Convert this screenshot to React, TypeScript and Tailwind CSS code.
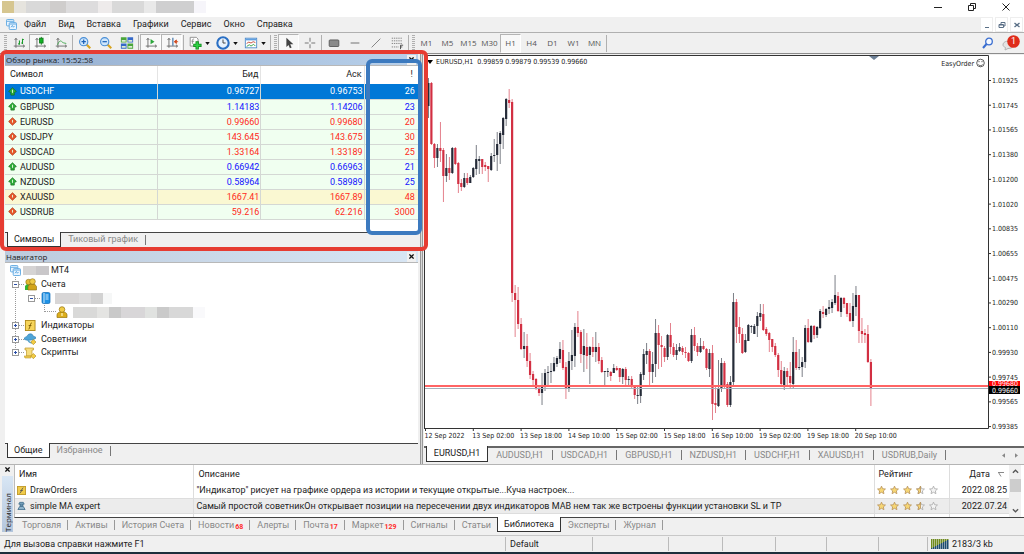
import type { ReactNode } from "react";

type Quote = { symbol: string; bid: string; ask: string; spread: string; up: boolean; color: string; row: string };

const ROW = "bg-[#f0fff0]";
const QUOTES: Quote[] = [
  { symbol: "USDCHF", bid: "0.96727", ask: "0.96753", spread: "26", up: true, color: "text-white", row: "bg-[#0078d7] text-white" },
  { symbol: "GBPUSD", bid: "1.14183", ask: "1.14206", spread: "23", up: true, color: "text-[#1414ff]", row: ROW },
  { symbol: "EURUSD", bid: "0.99660", ask: "0.99680", spread: "20", up: false, color: "text-[#ff2a1a]", row: ROW },
  { symbol: "USDJPY", bid: "143.645", ask: "143.675", spread: "30", up: false, color: "text-[#ff2a1a]", row: ROW },
  { symbol: "USDCAD", bid: "1.33164", ask: "1.33189", spread: "25", up: false, color: "text-[#ff2a1a]", row: ROW },
  { symbol: "AUDUSD", bid: "0.66942", ask: "0.66963", spread: "21", up: true, color: "text-[#1414ff]", row: ROW },
  { symbol: "NZDUSD", bid: "0.58964", ask: "0.58989", spread: "25", up: true, color: "text-[#1414ff]", row: ROW },
  { symbol: "XAUUSD", bid: "1667.41", ask: "1667.89", spread: "48", up: false, color: "text-[#ff2a1a]", row: "bg-[#faf8d2]" },
  { symbol: "USDRUB", bid: "59.216", ask: "62.216", spread: "3000", up: false, color: "text-[#ff2a1a]", row: ROW },
];

const MENU = ["Файл", "Вид", "Вставка", "Графики", "Сервис", "Окно", "Справка"];
const FRAMES = ["M1", "M5", "M15", "M30", "H1", "H4", "D1", "W1", "MN"];
const CHART_TABS = ["EURUSD,H1", "AUDUSD,H1", "USDCAD,H1", "GBPUSD,H1", "NZDUSD,H1", "USDCHF,H1", "XAUUSD,H1", "USDRUB,Daily"];
const TERMINAL_TABS: { name: string; count?: string }[] = [
  { name: "Торговля" },
  { name: "Активы" },
  { name: "История Счета" },
  { name: "Новости", count: "68" },
  { name: "Алерты" },
  { name: "Почта", count: "17" },
  { name: "Маркет", count: "129" },
  { name: "Сигналы" },
  { name: "Статьи" },
  { name: "Библиотека" },
  { name: "Эксперты" },
  { name: "Журнал" },
];

const PRICES = ["1.01925", "1.01745", "1.01565", "1.01380", "1.01200", "1.01020", "1.00835", "1.00655", "1.00475", "1.00290", "1.00110", "0.99930", "0.99745", "0.99565", "0.99385"];
const DATES = ["12 Sep 2022", "13 Sep 02:00", "13 Sep 18:00", "14 Sep 10:00", "15 Sep 02:00", "15 Sep 18:00", "16 Sep 10:00", "19 Sep 02:00", "19 Sep 18:00", "20 Sep 10:00"];

// high, body top, body bottom, low, 1 = bull
const CANDLES: number[][] = [
  [78, 83, 106, 118, 1], [82, 83, 144, 145, 0], [143, 144, 158, 168, 0], [144, 148, 158, 167, 1], [122, 148, 151, 162, 0],
  [148, 150, 176, 202, 0], [154, 168, 176, 182, 1], [157, 168, 173, 180, 0], [147, 148, 173, 174, 1], [147, 148, 164, 165, 0],
  [162, 163, 184, 193, 0], [179, 183, 187, 191, 0], [173, 178, 187, 188, 1], [173, 178, 183, 185, 0], [175, 177, 183, 183, 1],
  [167, 168, 177, 178, 1], [145, 159, 169, 175, 1], [156, 159, 161, 174, 1], [159, 159, 167, 174, 0], [162, 165, 167, 171, 0],
  [166, 166, 169, 182, 0], [153, 156, 170, 171, 1], [139, 155, 156, 162, 1], [132, 144, 155, 171, 1], [131, 133, 144, 164, 1],
  [117, 118, 135, 149, 1], [98, 99, 119, 126, 1], [89, 100, 103, 108, 0], [99, 102, 293, 302, 0], [285, 293, 300, 337, 0],
  [287, 300, 324, 329, 0], [318, 324, 349, 350, 0], [332, 346, 349, 358, 1], [334, 346, 361, 367, 0], [353, 361, 375, 379, 0],
  [371, 374, 380, 387, 0], [378, 379, 389, 390, 0], [385, 389, 393, 396, 0], [373, 386, 393, 405, 1], [369, 373, 386, 391, 1],
  [366, 372, 373, 387, 1], [363, 371, 372, 383, 1], [357, 363, 371, 372, 1], [356, 358, 364, 367, 1], [342, 349, 359, 363, 1],
  [340, 350, 368, 370, 0], [362, 367, 389, 399, 0], [352, 361, 389, 392, 1], [330, 355, 361, 370, 1], [323, 327, 356, 367, 1],
  [311, 327, 333, 337, 0], [330, 332, 354, 363, 0], [329, 346, 355, 372, 1], [333, 347, 356, 369, 0], [346, 347, 355, 384, 1],
  [337, 347, 352, 357, 0], [332, 347, 352, 362, 1], [343, 347, 361, 364, 0], [357, 360, 372, 373, 0], [371, 371, 372, 386, 1],
  [368, 371, 372, 377, 1], [371, 372, 376, 381, 0], [364, 368, 373, 373, 1], [366, 368, 370, 371, 0], [368, 368, 377, 382, 0],
  [368, 369, 377, 384, 1], [367, 369, 380, 385, 0], [376, 379, 380, 385, 1], [376, 379, 387, 389, 0], [385, 386, 395, 399, 0],
  [387, 395, 396, 404, 1], [372, 374, 396, 403, 1], [349, 354, 375, 380, 1], [343, 351, 355, 364, 1], [349, 351, 372, 385, 0],
  [352, 364, 372, 383, 1], [319, 333, 364, 377, 1], [325, 333, 345, 369, 0], [336, 345, 347, 367, 0], [346, 348, 357, 362, 0],
  [334, 335, 357, 360, 1], [323, 335, 347, 354, 0], [343, 347, 355, 357, 0], [344, 350, 355, 360, 1], [343, 347, 351, 352, 1],
  [346, 348, 352, 355, 0], [347, 352, 353, 358, 0], [352, 353, 361, 362, 0], [329, 335, 361, 363, 1], [327, 335, 346, 351, 0],
  [343, 346, 352, 356, 0], [338, 346, 352, 353, 1], [341, 346, 349, 350, 0], [348, 349, 368, 370, 0], [349, 353, 369, 377, 1],
  [345, 353, 404, 420, 0], [386, 403, 405, 413, 0], [360, 388, 406, 407, 1], [358, 363, 388, 392, 1], [361, 363, 385, 389, 0],
  [382, 384, 405, 407, 0], [376, 382, 405, 407, 1], [293, 302, 382, 387, 1], [299, 302, 327, 343, 0], [317, 327, 334, 343, 0],
  [328, 334, 353, 354, 0], [334, 340, 352, 353, 1], [324, 325, 341, 341, 1], [325, 326, 327, 333, 1], [324, 326, 334, 334, 1],
  [312, 316, 326, 337, 1], [304, 313, 317, 321, 1], [304, 314, 330, 331, 0], [327, 329, 334, 336, 0], [332, 333, 340, 352, 0],
  [339, 339, 347, 352, 0], [343, 346, 355, 357, 0], [353, 355, 370, 377, 0], [361, 370, 384, 387, 0], [367, 371, 385, 390, 1],
  [368, 371, 377, 386, 0], [362, 376, 383, 389, 0], [337, 352, 384, 389, 1], [340, 352, 368, 370, 0], [349, 367, 368, 370, 1],
  [357, 362, 367, 377, 1], [325, 328, 362, 368, 1], [319, 328, 342, 343, 0], [325, 326, 342, 343, 1], [325, 326, 335, 339, 0],
  [326, 327, 335, 338, 1], [309, 311, 328, 329, 1], [306, 312, 314, 318, 0], [308, 309, 315, 317, 1], [300, 307, 309, 314, 1],
  [299, 302, 308, 313, 1], [275, 295, 303, 305, 1], [292, 296, 311, 312, 0], [297, 298, 312, 317, 1], [297, 298, 304, 308, 0],
  [303, 303, 314, 317, 0], [303, 313, 321, 322, 0], [293, 306, 321, 327, 1], [286, 295, 307, 316, 1], [295, 295, 331, 343, 0],
  [318, 331, 334, 343, 0], [329, 333, 335, 343, 0], [325, 334, 362, 363, 0], [359, 362, 389, 406, 0],
];

function Ico({ children }: { children: ReactNode }) {
  return (
    <svg viewBox="0 0 16 16" className="h-[14px] w-[14px] shrink-0" fill="none">
      {children}
    </svg>
  );
}

const AXES = <path d="M4.500 3v10.500M2 11.500h12M3 4.500l1.500-2 1.500 2M12.500 10l2 1.500-2 1.500" stroke="#666" />;

function Lens({ minus }: { minus?: boolean }) {
  return (
    <Ico>
      <path d="M9.500 9.500l4.500 4.500" stroke="#d8a420" strokeWidth="2.500" />
      <circle cx="6.500" cy="6.500" r="4.700" fill="#cfe6fb" stroke="#4a8fd6" strokeWidth="1.300" />
      <path d={minus ? "M4 6.500h5" : "M4 6.500h5M6.500 4v5"} stroke="#1b62b8" strokeWidth="1.400" />
    </Ico>
  );
}

function Tool({ label, pressed, drop, children }: { label: string; pressed?: boolean; drop?: boolean; children: ReactNode }) {
  return (
    <button
      aria-label={label}
      className={`flex h-[19px] shrink-0 items-center justify-center text-[#555] ${drop ? "w-7 gap-[3px]" : "w-[21px]"} ${
        pressed ? "border border-[#b4b4b4] border-r-white border-b-white bg-[#f8f8f8]" : ""
      }`}
    >
      {children}
      {drop && (
        <svg viewBox="0 0 6 4" className="h-[3px] w-[5px]">
          <path d="M0 0h6L3 4z" fill="#111" />
        </svg>
      )}
    </button>
  );
}

function Sep() {
  return <div className="mx-px h-[17px] w-px shrink-0 bg-[#b0b0b0]" />;
}

function Grip() {
  return <div className="mr-px ml-[2px] h-4 w-[3px] shrink-0 bg-[repeating-linear-gradient(#b0b0b0_0_1px,#f0f0f0_1px_2px)]" />;
}

function AppLogo({ className }: { className: string }) {
  return (
    <svg viewBox="0 0 12 12" className={className} fill="#eaf5ff" stroke="#5aa5e0">
      <rect x=".5" y=".5" width="8" height="7" rx="1" />
      <path d="M1 2.500h7" />
      <rect x="3.500" y="4" width="8" height="7.500" rx="1" />
      <path d="M4 5.500h7M5.500 9l1.500-2 1 2 1.500-1.500" />
    </svg>
  );
}

function MenuBar() {
  return (
    <div className="flex h-4 items-center border-b border-[#b0b0b0] bg-[#f0f0f0] pl-[6px] text-[9px] text-[#222]">
      <AppLogo className="mr-px h-[11px] w-[11px]" />
      {MENU.map((m) => (
        <button key={m} className="pr-[6px] pl-[6px] leading-none last-of-type:pr-0">
          {m}
        </button>
      ))}
      <div className="ml-auto flex h-full gap-[2px] bg-white pr-px text-[#5a6f86]">
        <button aria-label="Свернуть график" className="flex w-[13px] items-center justify-center border border-[#eee]">
          <svg viewBox="0 0 8 8" className="h-2 w-2"><path d="M2 6.500h4" stroke="currentColor" /></svg>
        </button>
        <button aria-label="Восстановить график" className="flex w-[13px] items-center justify-center border border-[#eee]">
          <svg viewBox="0 0 8 8" className="h-2 w-2" fill="none" stroke="currentColor"><path d="M3 3V1.500h4V5H6M1 3.500h4.500v3H1zM1 4h4" /></svg>
        </button>
        <button aria-label="Закрыть график" className="flex w-[13px] items-center justify-center border border-[#eee]">
          <svg viewBox="0 0 8 8" className="h-2 w-2" stroke="currentColor" strokeWidth="1.400"><path d="M1.500 2l5 4M6.500 2l-5 4" /></svg>
        </button>
      </div>
    </div>
  );
}

function Toolbar() {
  return (
    <div className="flex h-[21px] items-center border-b border-[#8c8c8c] bg-[#f0f0f0] pl-[2px]">
      <Grip />
      <Tool label="Бары"><Ico>{AXES}<path d="M8.500 5v5M8.500 9H7M12 3v6M12 4h1.500M10.500 8H12" stroke="#189a2a" strokeWidth="1.200" /></Ico></Tool>
      <Tool label="Японские свечи" pressed><Ico>{AXES}<path d="M9.500 1v9" stroke="#117a1c" /><rect x="7.500" y="2.500" width="4" height="5.500" fill="#12b325" stroke="#117a1c" /></Ico></Tool>
      <Tool label="Линия"><Ico>{AXES}<path d="M4 10c2-5 4-5 5-3.500S12 8 14 8.500" stroke="#3aa648" /></Ico></Tool>
      <Sep />
      <Tool label="Увеличить"><Lens /></Tool>
      <Tool label="Уменьшить"><Lens minus /></Tool>
      <Tool label="Расположить окна">
        <Ico>
          <path d="M1 1.500h6.500v6H1zM8.500 8.500H15v6H8.500z" fill="#4aa53a" />
          <path d="M8.500 1.500H15v6H8.500zM1 8.500h6.500v6H1z" fill="#3568c8" />
          <path d="M2 4.500h4.500v2H2zM9.500 4.500H14v2H9.500zM2 11.500h4.500v2H2zM9.500 11.500H14v2H9.500z" fill="#dcebd5" />
        </Ico>
      </Tool>
      <Sep />
      <Tool label="Автопрокрутка" pressed><Ico>{AXES}<path d="M7.500 3.500v6l4.500-3z" fill="#2ba53a" /></Ico></Tool>
      <Tool label="Сдвиг графика" pressed><Ico>{AXES}<path d="M9 2v9" stroke="#3a6ea5" strokeWidth="1.300" /><path d="M15 6.500h-2M10.500 6.500l2.500-2v4z" fill="#d0481c" stroke="#d0481c" /></Ico></Tool>
      <Sep />
      <Tool label="Индикаторы" drop>
        <Ico>
          <path d="M2.500 1.500h7l2 2v8h-9z" fill="#fff" stroke="#888" />
          <path d="M5 9V5c0-1 .5-1.500 2-1.500M4 6h3" stroke="#888" />
          <path d="M10.500 6v9.500M6 10.800h9.500" stroke="#0f8a1d" strokeWidth="3.800" />
          <path d="M10.500 7v7.500M7 10.800h7.500" stroke="#2fd045" strokeWidth="2" />
        </Ico>
      </Tool>
      <Tool label="Периоды" drop>
        <Ico>
          <circle cx="8" cy="8" r="6.500" fill="#e8f2fd" stroke="#2a6fc4" strokeWidth="2.400" />
          <path d="M8 4v4h3" stroke="#333" />
        </Ico>
      </Tool>
      <Tool label="Шаблоны" drop>
        <Ico>
          <rect x="1.500" y="2.500" width="13" height="11" fill="#fff" stroke="#4a88c8" />
          <path d="M2 4h12" stroke="#5f9fe0" strokeWidth="2" />
          <path d="M3 8.500l2.500-1.500L8 8l2.500-1.500L13 7.500" stroke="#c0402c" />
          <path d="M3 12l3-2 2 1.500 3-2 2 2" stroke="#2a9a3a" />
        </Ico>
      </Tool>
      <Sep />
      <Grip />
      <Tool label="Курсор" pressed><Ico><path d="M5 2v10.500l2.500-2.300L9 14l2-.8-1.600-3.700H13z" fill="#444" /></Ico></Tool>
      <Tool label="Перекрестие"><Ico><path d="M8 2v4.500M8 9.500V14M2 8h4.500M9.500 8H14" stroke="#666" /></Ico></Tool>
      <Sep />
      <Tool label="Прямоугольник"><Ico><rect x="2.500" y="4.500" width="11" height="7.500" rx="1" fill="#8a8a8a" stroke="#555" /></Ico></Tool>
      <Tool label="Горизонтальная линия"><Ico><path d="M3 8h10" stroke="#777" strokeWidth="1.200" /></Ico></Tool>
      <Tool label="Трендовая линия"><Ico><path d="M3 13l10-10" stroke="#777" /></Ico></Tool>
      <Tool label="Фибоначчи">
        <Ico>
          <path d="M2 2.500h12M2 5.500h12M2 8.500h12M2 12.500h8" stroke="#777" strokeDasharray="1.500 1" />
          <path d="M12 15v-4.500h3M12 12.500h2" stroke="#444" />
        </Ico>
      </Tool>
      <Sep />
      <Grip />
      {FRAMES.map((f) => (
        <Tool key={f} label={f} pressed={f === "H1"}>
          <span className="font-['Open_Sans',sans-serif] text-[8px]">{f}</span>
        </Tool>
      ))}
      <Sep />
      <div className="mr-1 ml-auto flex items-center gap-2">
        <button aria-label="Поиск">
          <svg viewBox="0 0 12 12" className="h-3 w-3" fill="#f4f8ff" stroke="#3a6ed0" strokeWidth="1.300">
            <circle cx="7" cy="4.500" r="3.300" />
            <path d="M4.500 7L1 11" strokeWidth="2" />
          </svg>
        </button>
        <button aria-label="Уведомления" className="relative h-4 w-[18px]">
          <svg viewBox="0 0 18 16" className="h-4 w-[18px]">
            <path d="M1 10c0-3 3-4 6-4s5 2 5 4-3 3.500-6 3.500L3 15l.5-2.500C2 12 1 11 1 10z" fill="#e4e4e4" stroke="#b4b4b4" />
            <circle cx="11.500" cy="6.500" r="6.300" fill="#df2c1a" />
          </svg>
          <span className="absolute top-0 right-0 w-[13px] text-center text-[9px] leading-[13px] text-white">1</span>
        </button>
      </div>
    </div>
  );
}

function TitleStrip({ title, from }: { title: string; from: string }) {
  return (
    <div className={`flex h-3 items-center justify-between border-b border-[#b8b8b8] bg-linear-to-r pr-[2px] pl-px font-['Open_Sans',sans-serif] text-[8px] text-[#222] ${from}`}>
      <h2>{title}</h2>
      <button aria-label={`Закрыть: ${title}`} className="flex h-[10px] w-[9px] items-center justify-center bg-[#f0f0f0]">
        <svg viewBox="0 0 6 6" className="h-[5px] w-[5px]" stroke="#111" strokeWidth="1.500"><path d="M.5.5l5 5M5.500.5l-5 5" /></svg>
      </button>
    </div>
  );
}

function PanelTabs({ active, other }: { active: string; other: string }) {
  return (
    <div className="flex h-[15px] items-start border-t border-[#444] bg-[#f0f0f0] pl-[2px] text-[9px] leading-[13px]">
      <button className="-mt-px h-[15px] border border-t-0 border-[#333] bg-white px-[6px] text-[#222]">{active}</button>
      <button className="px-[7px] text-[#888]">{other}</button>
      <span className="mt-[2px] h-[10px] w-px bg-[#777]" />
    </div>
  );
}

function Direction({ up }: { up: boolean }) {
  return (
    <svg viewBox="0 0 10 10" className="h-[9px] w-[9px] shrink-0">
      {up ? (
        <path d="M5 .8L9.300 5 7 6.200V9H3.200V6.200L.7 5z" fill="#2fae3a" stroke="#14701e" strokeWidth=".8" />
      ) : (
        <path d="M5 .8L9.300 5 5 9.200.7 5z" fill="#e8582c" stroke="#a83410" strokeWidth=".8" />
      )}
      <path d={up ? "M5 3v3.500" : "M5 3.200v3"} stroke="#e4ffe0" strokeWidth="1" fill="none" />
    </svg>
  );
}

function MarketWatch() {
  return (
    <section className="relative">
      <TitleStrip title="Обзор рынка: 15:52:58" from="from-[#96afd0] to-[#b8d0ea]" />
      <div className="h-[166px] bg-white">
        <table className="w-full table-fixed text-[9px] text-[#222]">
          <colgroup>
            <col className="w-[37%]" />
            <col className="w-[25%]" />
            <col className="w-[25%]" />
            <col />
          </colgroup>
          <thead>
            <tr className="h-[18px]">
              <th className="border-r border-[#e4e4e4] pl-[5px] text-left font-normal">Символ</th>
              <th className="border-r border-[#e4e4e4] pr-[2px] text-right font-normal">Бид</th>
              <th className="border-r border-[#e4e4e4] pr-[2px] text-right font-normal">Аск</th>
              <th className="pr-[5px] text-right font-normal">!</th>
            </tr>
          </thead>
          <tbody>
            {QUOTES.map((q) => (
              <tr key={q.symbol} className={`h-[15px] leading-[14px] ${q.row}`}>
                <td className="border-r border-b border-[#d4d8d4] p-0 pl-[3px]">
                  <span className="flex items-center gap-[3px]">
                    <Direction up={q.up} />
                    {q.symbol}
                  </span>
                </td>
                <td className={`border-r border-b border-[#d4d8d4] p-0 pr-px text-right ${q.color}`}>{q.bid}</td>
                <td className={`border-r border-b border-[#d4d8d4] p-0 pr-px text-right ${q.color}`}>{q.ask}</td>
                <td className={`border-b border-[#d4d8d4] p-0 pr-[3px] text-right ${q.color}`}>{q.spread}</td>
              </tr>
            ))}
          </tbody>
        </table>
      </div>
      <PanelTabs active="Символы" other="Тиковый график" />
      {/* highlight frames */}
      <div className="pointer-events-none absolute -top-1 -right-[10px] -bottom-1 -left-[5px] z-20 rounded-md border-4 border-[#e63c32]" />
      <div className="pointer-events-none absolute top-[5px] -right-1 bottom-3 z-10 w-14 rounded-md border-4 border-[#3c7abf]" />
    </section>
  );
}

function Toggle({ open }: { open?: boolean }) {
  return (
    <svg viewBox="0 0 7 7" className="h-[7px] w-[7px] shrink-0" fill="#fff" stroke="#999">
      <rect x=".5" y=".5" width="6" height="6" />
      <path d={open ? "M2 3.500h3" : "M2 3.500h3M3.500 2v3"} stroke="#2b4fa8" />
    </svg>
  );
}

function Dots() {
  return <span className="w-[5px] shrink-0 border-t border-dotted border-[#999]" />;
}

function Person() {
  return (
    <svg viewBox="0 0 12 12" className="h-3 w-3 shrink-0">
      <path d="M1 11.500V9c0-2 1.500-2.500 3-3h4c2 .5 3 1.500 3 3v2.500z" fill="#dcae1c" stroke="#97720c" strokeWidth=".7" />
      <circle cx="6" cy="3.500" r="2.800" fill="#f0cc48" stroke="#97720c" strokeWidth=".7" />
      <path d="M6 7v3" stroke="#fff5c0" strokeWidth="1.200" />
    </svg>
  );
}

function Navigator() {
  return (
    <section className="flex flex-1 flex-col">
      <TitleStrip title="Навигатор" from="from-[#bccbdd] to-[#d8e6f4]" />
      <div className="flex-1 bg-white pl-[5px] text-[9px] leading-[13px] text-[#222]">
        <div className="flex h-[14px] items-center">
          <AppLogo className="h-[11px] w-[11px]" />
          <span className="ml-[2px] h-[9px] w-[13px] bg-[#d5d3d3]" />
          <span className="mr-[2px] h-[9px] w-[13px] bg-[#c9c7c9]" />
          MT4
        </div>
        <ul className="relative pl-[2px] before:absolute before:top-0 before:bottom-[7px] before:left-[5px] before:border-l before:border-dotted before:border-[#999]">
          <li>
            <div className="relative flex h-[14px] items-center">
              <Toggle open />
              <Dots />
              <svg viewBox="0 0 13 13" className="mr-1 h-[13px] w-[13px]">
                <path d="M1 12V8l2-2h3v6z" fill="#33b533" />
                <circle cx="4.500" cy="4" r="2.700" fill="#e3bb30" stroke="#8c6c10" strokeWidth=".6" />
                <path d="M4 12V8.500L6 6h4.500l2 2.500V12z" fill="#d2a41a" stroke="#8c6c10" strokeWidth=".6" />
                <circle cx="8.500" cy="3.500" r="2.800" fill="#f0cc48" stroke="#8c6c10" strokeWidth=".6" />
              </svg>
              Счета
            </div>
            <ul className="pl-4">
              <li>
                <div className="flex h-[14px] items-center">
                  <Toggle open />
                  <Dots />
                  <svg viewBox="0 0 10 12" className="mr-1 ml-px h-3 w-[10px]">
                    <rect x="1" y=".5" width="8" height="11" rx="1.500" fill="#1e92e6" stroke="#0b68b4" strokeWidth=".7" />
                    <path d="M4.500 3h3M4.500 5h3M4.500 7h3M3 1v10" stroke="#fff" strokeWidth=".8" />
                  </svg>
                  <span className="h-[11px] w-6 bg-[#d8d6d6]" />
                  <span className="h-[11px] w-3 bg-[#dedddd]" />
                  <span className="h-[11px] w-3 bg-[#d2d2d2]" />
                  <span className="h-[11px] w-[9px] bg-[#f6f7f7]" />
                </div>
                <div className="flex h-[14px] items-center pl-4">
                  <span className="h-[7px] w-3 self-start border-b border-l border-dotted border-[#999]" />
                  <Person />
                  <span className="ml-[5px] h-[11px] w-6 bg-[#d9d9d8]" />
                  <span className="h-[11px] w-3 bg-[#e4e4e2]" />
                  <span className="h-[11px] w-3 bg-[#c9c9c9]" />
                  <span className="h-[11px] w-6 bg-[#d8d6d8]" />
                  <span className="h-[11px] w-3 bg-[#e0e2e0]" />
                  <span className="h-[11px] w-3 bg-[#cacaca]" />
                  <span className="h-[11px] w-6 bg-[#d8d8d8]" />
                  <span className="h-[11px] w-3 bg-[#f9f9fb]" />
                </div>
              </li>
            </ul>
          </li>
          <li className="relative flex h-[13px] items-center">
            <Toggle />
            <Dots />
            <svg viewBox="0 0 12 12" className="mr-[5px] h-[11px] w-3">
              <rect x="1" y=".5" width="10.500" height="11" fill="#f6d45a" stroke="#b08a18" />
              <path d="M4.500 10c1.500 0 1.500-7 3.500-7M4.500 6h3" stroke="#7a5a00" fill="none" />
            </svg>
            Индикаторы
          </li>
          <li className="relative flex h-[14px] items-center">
            <Toggle />
            <Dots />
            <svg viewBox="0 0 12 12" className="mr-[5px] h-3 w-3">
              <path d="M0 6c0-1.500 1.500-2 3-2.500C3.500 1.500 5 .8 6.500.8S9 2 9.500 3.500c1.500 0 2.500.5 2.500 1.500C10 7.500 2 8 0 6z" fill="#4fa5d8" stroke="#2a78ac" strokeWidth=".6" />
              <path d="M4 7c1 2.500 3 3 4 2.500" stroke="#5aa5cc" strokeWidth="1.500" fill="none" />
              <path d="M9.300 6.500L12 9l-2.700 2.700L6.800 9z" fill="#f3cd45" stroke="#b08a18" strokeWidth=".6" />
            </svg>
            Советники
          </li>
          <li className="relative flex h-[13px] items-center">
            <Toggle />
            <Dots />
            <svg viewBox="0 0 12 12" className="mr-[5px] h-3 w-3">
              <path d="M1 1h8.500v2H8v6H2.500V3H1z" fill="#f6dc7c" stroke="#c09a28" strokeWidth=".7" />
              <path d="M0 9h7v2H1z" fill="#eeca50" stroke="#c09a28" strokeWidth=".6" />
              <path d="M9.300 6.500L12 9l-2.700 2.700L6.800 9z" fill="#f3cd45" stroke="#b08a18" strokeWidth=".6" />
            </svg>
            Скрипты
          </li>
        </ul>
      </div>
      <PanelTabs active="Общие" other="Избранное" />
    </section>
  );
}

function PriceChart() {
  return (
    <svg viewBox="424 55 600 389" className="h-[389px] w-[600px]" fontFamily="'DejaVu Sans Condensed', 'DejaVu Sans', sans-serif" fontSize="7" fill="#222">
      <path d="M424.500 429V55.500H988.500V428.500H424" fill="none" stroke="#333" />
      <path d="M869 56h10l-5 4z" fill="#6c7f95" />
      <path d="M427 60h6l-3 4z" fill="#000" />
      <text x="436" y="64">EURUSD,H1&#160; 0.99859 0.99879 0.99539 0.99660</text>
      <text x="974" y="66" textAnchor="end">EasyOrder</text>
      <g fill="none" stroke="#333" strokeWidth=".8">
        <circle cx="980.500" cy="63" r="3.800" />
        <path d="M978.500 64.500c1 1.500 3 1.500 4 0M979 61v1.200M982 61v1.200" />
      </g>
      {CANDLES.map(([high, top, bottom, low, bull], i) => {
        const x = 428.4 + i * 2.99;
        return (
          <g key={i} fill={bull ? "#252b38" : "#d22f42"}>
            <rect x={x - 0.4} y={high} width={0.8} height={low - high} opacity={0.75} />
            <rect x={x - 1.1} y={top} width={2.2} height={Math.max(1, bottom - top)} />
          </g>
        );
      })}
      <rect x="425" y="385" width="563" height="2" fill="#ff6464" />
      <rect x="425" y="388" width="563" height="1" fill="#a4b0bb" />
      {PRICES.map((p, i) => (
        <g key={p}>
          <path d={`M988 ${80.5 + i * 24.72}h3`} stroke="#333" />
          <text x="992" y={83 + i * 24.72}>{p}</text>
        </g>
      ))}
      <rect x="989" y="381" width="31" height="6" fill="#f00" />
      <text x="992" y="386" fill="#fff">0.99680</text>
      <rect x="989" y="386" width="31" height="8" fill="#000" />
      <text x="992" y="393" fill="#fff">0.99660</text>
      {DATES.map((d, i) => (
        <g key={d}>
          <path d={`M${425.5 + i * 47.8} 429v2`} stroke="#333" />
          <text x={424.5 + i * 47.8} y="438">{d}</text>
        </g>
      ))}
    </svg>
  );
}

function Stars() {
  const star = "M5 .7l1.300 2.900 3.100.3-2.300 2.100.6 3.100L5 7.500 2.300 9.100l.6-3.100L.6 3.900l3.100-.3z";
  return (
    <span className="flex gap-1" aria-label="3.5">
      {[0, 1, 2, 3, 4].map((n) => (
        <svg key={n} viewBox="0 0 10 10" className="h-[10px] w-[9px]">
          <path d={star} fill={n < 3 ? "#f7d774" : "#f4f4f4"} stroke={n < 3 ? "#b8935a" : "#aaa"} strokeWidth=".9" />
          {n === 3 && <path d="M5 .7v6.800L2.300 9.100l.6-3.100L.6 3.900l3.100-.3z" fill="#f7d774" stroke="#b8935a" strokeWidth=".9" />}
        </svg>
      ))}
    </span>
  );
}

function Terminal() {
  return (
    <section className="flex h-[71px] border-t border-[#b4b4b4] bg-[#f0f0f0]">
      <div className="flex w-[14px] shrink-0 flex-col items-center pb-[3px]">
        <button aria-label="Закрыть терминал" className="mt-[2px] mb-1">
          <svg viewBox="0 0 6 6" className="h-[5px] w-[5px]" stroke="#111" strokeWidth="1.500"><path d="M.5.5l5 5M5.500.5l-5 5" /></svg>
        </button>
        <h2 className="w-[11px] flex-1 rotate-180 bg-linear-to-t from-[#d8e6f4] to-[#b4c6dc] font-['Open_Sans',sans-serif] text-[8px] leading-[11px] text-[#222] [writing-mode:vertical-rl]">Терминал</h2>
      </div>
      <div className="flex min-w-0 flex-1 flex-col">
        <div className="flex h-[53px] overflow-hidden border-b border-l border-[#444] border-l-[#bbb] bg-white">
          <table className="h-fit flex-1 table-fixed text-[9px] leading-[14px] text-[#222]">
            <colgroup>
              <col className="w-[18%]" />
              <col />
              <col className="w-[75px]" />
              <col className="w-[60px]" />
            </colgroup>
            <thead>
              <tr className="h-[18px]">
                <th className="border-r border-[#ddd] pl-1 text-left font-normal">Имя</th>
                <th className="border-r border-[#ddd] pl-1 text-left font-normal">Описание</th>
                <th className="border-r border-[#ddd] pl-1 text-left font-normal">Рейтинг</th>
                <th className="pr-[5px] text-right font-normal">
                  <span className="flex items-center justify-end gap-2">
                    Дата
                    <svg viewBox="0 0 6 5" className="h-[5px] w-[6px]" fill="none" stroke="#888"><path d="M0 .5h6M.5.5L3 4.500" /></svg>
                  </span>
                </th>
              </tr>
            </thead>
            <tbody>
              <tr className="h-[15px]">
                <td className="border-r border-[#ddd] pl-[2px]">
                  <span className="flex items-center gap-1">
                    <svg viewBox="0 0 10 10" className="h-[9px] w-[9px]">
                      <rect x=".5" y=".5" width="9" height="9" fill="#f0cb4a" stroke="#c09a28" />
                      <path d="M3 8c2 0 2-6 4-6M3.500 5h3" stroke="#555" fill="none" />
                    </svg>
                    DrawOrders
                  </span>
                </td>
                <td className="truncate border-r border-[#ddd] pl-[2px]">"Индикатор" рисует на графике ордера из истории и текущие открытые...Куча настроек...</td>
                <td className="border-r border-[#ddd] pl-[2px]"><Stars /></td>
                <td className="pr-[2px] text-right">2022.08.25</td>
              </tr>
              <tr className="h-[15px] border-y border-[#ddd] bg-[#ececec]">
                <td className="border-r border-[#ddd] pl-[2px]">
                  <span className="flex items-center gap-1">
                    <svg viewBox="0 0 10 10" className="h-[9px] w-[9px]" fill="#8fb4cc" stroke="#2d5f80" strokeWidth=".8">
                      <path d="M2 3.500h6L7 1.500H3zM3.500 3.500v2h3v-2M1 9.500l2-3.500h4l2 3.500z" />
                    </svg>
                    simple MA expert
                  </span>
                </td>
                <td className="truncate border-r border-[#ddd] pl-[2px]">Самый простой советникОн открывает позиции на пересечении двух индикаторов MAB нем так же встроены функции установки SL и TP</td>
                <td className="border-r border-[#ddd] pl-[2px]"><Stars /></td>
                <td className="pr-[2px] text-right">2022.07.24</td>
              </tr>
              <tr className="h-[15px]">
                <td className="border-r border-[#ddd]" />
                <td className="border-r border-[#ddd]" />
                <td className="border-r border-[#ddd] pl-[2px]"><Stars /></td>
                <td />
              </tr>
            </tbody>
          </table>
          <div className="mr-[3px] flex w-3 flex-col items-center justify-between bg-[#f0f0f0] py-1">
            <svg viewBox="0 0 8 5" className="h-[5px] w-[7px]" fill="none" stroke="#555" strokeWidth="1.500"><path d="M1 4l3-3 3 3" /></svg>
            <div className="-mt-3 h-[13px] w-[11px] bg-[#cdcdcd]" />
            <svg viewBox="0 0 8 5" className="h-[5px] w-[7px]" fill="none" stroke="#555" strokeWidth="1.500"><path d="M1 1l3 3 3-3" /></svg>
          </div>
        </div>
        <nav className="flex pl-px text-[9px] leading-[13px] text-[#888]">
          {TERMINAL_TABS.map((t) =>
            t.name === "Библиотека" ? (
              <button key={t.name} className="-mt-px h-[15px] border border-t-0 border-[#333] bg-white px-[6px] text-[#222]">
                {t.name}
              </button>
            ) : (
              <button key={t.name} className="flex items-center">
                <span className="pr-[6px] pl-[7px]">
                  {t.name}
                  {t.count && <sub className="pl-px text-[7px] font-bold text-[#ff2a2a]">{t.count}</sub>}
                </span>
                {t.name !== "Статьи" && <span className="h-[10px] w-px bg-[#999]" />}
              </button>
            ),
          )}
        </nav>
      </div>
    </section>
  );
}

function StatusBar() {
  const cells = ["w-[76px]", "w-[54px]", "w-[53px]", "w-[51px]", "w-[52px]", "w-[49px]"];
  return (
    <footer className="flex h-[19px] items-center border-t border-b-2 border-t-[#c8c8c8] border-b-[#1d2f3c] bg-[#f0f0f0] text-[9px] leading-[14px] text-[#222]">
      <span className="flex-1 pl-1">Для вызова справки нажмите F1</span>
      <span className="h-[14px] w-[87px] border-l border-[#bbb] pl-1">Default</span>
      {cells.map((w, i) => (
        <span key={i} className={`h-[14px] border-l border-[#bbb] ${w}`} />
      ))}
      <span className="flex h-[14px] w-[97px] items-center gap-[3px] border-l border-[#bbb] pl-[3px]">
        <svg viewBox="0 0 18 10" className="h-[10px] w-[18px]">
          {[0, 1, 2, 3, 4, 5, 6, 7, 8].map((n) => (
            <g key={n}>
              <rect x={n * 2} y="0" width="1.500" height={9 - n} fill="#6f8a1e" />
              <rect x={n * 2} y={9 - n} width="1.500" height={n + 1} fill="#1d4b6e" />
            </g>
          ))}
        </svg>
        2183/3 kb
      </span>
    </footer>
  );
}

export default function App() {
  return (
    <div className="flex min-h-screen flex-col overflow-hidden bg-[#f0f0f0] font-['Roboto','Open_Sans',sans-serif]">
      <header className="flex h-[17px] items-start bg-white pt-px pl-[2px]">
        <span className="h-3 w-3 bg-[#d6c690]" />
        <span className="h-3 w-3 bg-[#e6e4de]" />
        <span className="h-3 w-6 bg-[#d9d9d9]" />
        <span className="h-3 w-4 bg-[#cfcdcc]" />
        <span className="h-3 w-8 bg-[#dddcdd]" />
        <span className="h-3 w-[14px] bg-[#eeebeb]" />
        <span className="h-3 w-8 bg-[#d9d9d9]" />
        <span className="h-3 w-3 bg-[#e9e9e9]" />
        <span className="h-3 w-[38px] bg-[#cfcfd0]" />
        <span className="h-3 w-[12px] bg-[#f6f5fa]" />
        <div className="mt-[2px] mr-[14px] ml-auto flex gap-[26px] text-[#222]">
          <button aria-label="Свернуть"><svg viewBox="0 0 8 8" className="h-2 w-2" stroke="currentColor"><path d="M0 4.500h8" /></svg></button>
          <button aria-label="Развернуть"><svg viewBox="0 0 8 8" className="h-2 w-2" fill="none" stroke="currentColor"><path d="M.5 2.500h5v5h-5zM2.500 2V.5h5v5H6" /></svg></button>
          <button aria-label="Закрыть"><svg viewBox="0 0 8 8" className="h-2 w-2" stroke="currentColor"><path d="M.5.5l7 7M7.500.5l-7 7" /></svg></button>
        </div>
      </header>
      <MenuBar />
      <Toolbar />
      <main className="flex flex-1">
        <div className="flex w-[41%] shrink-0 flex-col gap-1 pr-[2px] pb-[6px] pl-[5px]">
          <MarketWatch />
          <Navigator />
        </div>
        <div className="mr-px w-[3px] shrink-0 border-x border-[#999] bg-[#d8d8d8]" />
        <div className="flex min-w-0 flex-1 flex-col">
          <div className="mt-px flex-1 overflow-hidden bg-white">
            <PriceChart />
          </div>
          <nav className="mb-[2px] flex h-4 border-t-2 border-[#666] pl-[2px] text-[9px] leading-[13px] text-[#888]">
            {CHART_TABS.map((t, i) =>
              i === 0 ? (
                <button key={t} className="-mt-[2px] border border-t-0 border-[#333] bg-white px-[7px] text-[#222]">
                  {t}
                </button>
              ) : (
                <button key={t} className="flex items-center">
                  <span className="px-2">{t}</span>
                  <span className="h-[10px] w-px bg-[#777]" />
                </button>
              ),
            )}
            <span className="mr-[6px] ml-auto flex items-center gap-[10px]">
              <svg viewBox="0 0 4 6" className="h-[5px] w-[3px]" fill="#888"><path d="M4 0v6L0 3z" /></svg>
              <svg viewBox="0 0 4 6" className="h-[5px] w-[3px]" fill="#888"><path d="M0 0v6l4-3z" /></svg>
            </span>
          </nav>
        </div>
      </main>
      <Terminal />
      <StatusBar />
    </div>
  );
}
